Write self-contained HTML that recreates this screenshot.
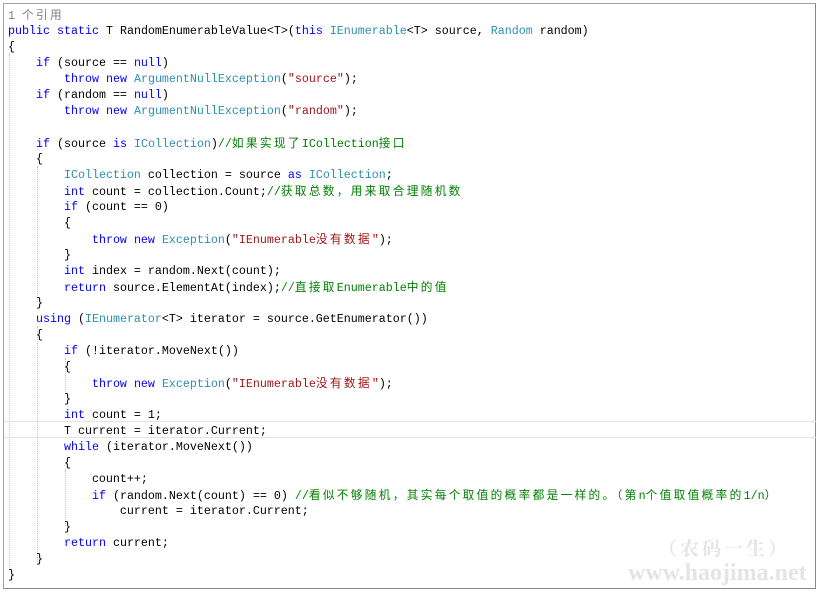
<!DOCTYPE html><html><head><style>
body{margin:0;width:821px;height:594px;background:#fff;overflow:hidden;position:relative}
#f{position:absolute;left:3px;top:3px;width:813px;height:586px;border:1px solid #a0a0a0;box-sizing:border-box;border-right-color:#888;border-bottom-color:#888}
#code{position:absolute;left:8px;top:7px;margin:0;font:11.67px/16px "Liberation Mono","Noto Sans CJK SC",monospace;color:#000}
#code div{height:16px;white-space:pre}
.c{letter-spacing:2.33px;font-family:"Noto Sans CJK SC","WenQuanYi Zen Hei",sans-serif;line-height:16px}
.k{color:#0000ff}.t{color:#2b91af}.s{color:#a31515}.g{color:#008000}.m{color:#808080}
.hl{position:absolute;left:4px;width:812px;top:421px;height:15px;border-top:1px solid #e4e4e4;border-bottom:1px solid #e4e4e4}
.gd{position:absolute;width:0;border-left:1px dotted #c8c8c8}
.w1{position:absolute;left:658px;top:537px;font:bold 19px/22px "Noto Serif CJK SC",serif;color:#e4e4e4;letter-spacing:3px}
.w2{position:absolute;left:628px;top:559px;font:bold 24px/28px "Liberation Serif",serif;color:#e4e4e4}
</style></head><body>
<div id="f"></div>
<div class="hl"></div>
<div class="gd" style="left:9px;top:54px;height:516px"></div>
<div class="gd" style="left:37px;top:166px;height:136px"></div>
<div class="gd" style="left:37px;top:326px;height:236px"></div>
<div class="gd" style="left:65px;top:358px;height:36px"></div>
<div class="gd" style="left:65px;top:470px;height:56px"></div>
<div class="w1">（农码一生）</div>
<div class="w2">www.haojima.net</div>
<div id="code">
<div><span class="m">1 <span class="c">个引用</span></span></div>
<div><span class="k">public</span> <span class="k">static</span> T RandomEnumerableValue&lt;T&gt;(<span class="k">this</span> <span class="t">IEnumerable</span>&lt;T&gt; source, <span class="t">Random</span> random)</div>
<div>{</div>
<div>    <span class="k">if</span> (source == <span class="k">null</span>)</div>
<div>        <span class="k">throw</span> <span class="k">new</span> <span class="t">ArgumentNullException</span>(<span class="s">"source"</span>);</div>
<div>    <span class="k">if</span> (random == <span class="k">null</span>)</div>
<div>        <span class="k">throw</span> <span class="k">new</span> <span class="t">ArgumentNullException</span>(<span class="s">"random"</span>);</div>
<div> </div>
<div>    <span class="k">if</span> (source <span class="k">is</span> <span class="t">ICollection</span>)<span class="g">//<span class="c">如果实现了</span>ICollection<span class="c">接口</span></span></div>
<div>    {</div>
<div>        <span class="t">ICollection</span> collection = source <span class="k">as</span> <span class="t">ICollection</span>;</div>
<div>        <span class="k">int</span> count = collection.Count;<span class="g">//<span class="c">获取总数，用来取合理随机数</span></span></div>
<div>        <span class="k">if</span> (count == 0)</div>
<div>        {</div>
<div>            <span class="k">throw</span> <span class="k">new</span> <span class="t">Exception</span>(<span class="s">"IEnumerable<span class="c">没有数据</span>"</span>);</div>
<div>        }</div>
<div>        <span class="k">int</span> index = random.Next(count);</div>
<div>        <span class="k">return</span> source.ElementAt(index);<span class="g">//<span class="c">直接取</span>Enumerable<span class="c">中的值</span></span></div>
<div>    }</div>
<div>    <span class="k">using</span> (<span class="t">IEnumerator</span>&lt;T&gt; iterator = source.GetEnumerator())</div>
<div>    {</div>
<div>        <span class="k">if</span> (!iterator.MoveNext())</div>
<div>        {</div>
<div>            <span class="k">throw</span> <span class="k">new</span> <span class="t">Exception</span>(<span class="s">"IEnumerable<span class="c">没有数据</span>"</span>);</div>
<div>        }</div>
<div>        <span class="k">int</span> count = 1;</div>
<div>        T current = iterator.Current;</div>
<div>        <span class="k">while</span> (iterator.MoveNext())</div>
<div>        {</div>
<div>            count++;</div>
<div>            <span class="k">if</span> (random.Next(count) == 0) <span class="g">//<span class="c">看似不够随机，其实每个取值的概率都是一样的。（第</span>n<span class="c">个值取值概率的</span>1/n<span class="c">）</span></span></div>
<div>                current = iterator.Current;</div>
<div>        }</div>
<div>        <span class="k">return</span> current;</div>
<div>    }</div>
<div>}</div>
</div>
</body></html>
